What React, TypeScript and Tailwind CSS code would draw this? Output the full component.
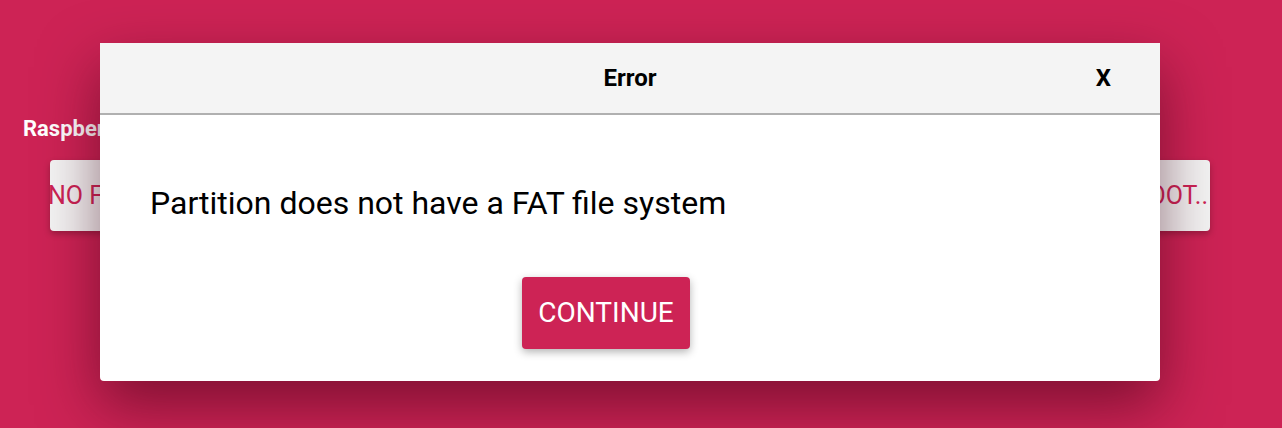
import React from "react";

export default function App() {
  return (
    <div className="relative h-[428px] w-full overflow-hidden bg-[#cd2355] font-['Roboto',sans-serif]">
      {/* page behind the dialog */}
      <div className="flex justify-between pt-[115px] pl-[23px] pr-[72px]">
        <div className="flex flex-col">
          <div className="h-[45px] whitespace-nowrap text-[22px] font-bold leading-[27px] text-white">Raspberry Pi Device</div>
          <button className="ml-[27px] flex h-[71px] w-[300px] items-center overflow-hidden rounded-[4px] bg-[#f4f4f4] text-[25px] whitespace-nowrap text-[#cd2355] shadow-[0_3px_6px_rgba(0,0,0,0.25)]">
            <span className="-ml-[2px]">NO FILTERING</span>
          </button>
        </div>
        <div className="flex flex-col">
          <div className="h-[45px] whitespace-nowrap text-[22px] font-bold leading-[27px] text-white">Operating System</div>
          <button className="flex h-[71px] w-[300px] items-center justify-center overflow-hidden rounded-[4px] bg-[#f4f4f4] text-[25px] whitespace-nowrap text-[#cd2355] shadow-[0_3px_6px_rgba(0,0,0,0.25)]">
            CHOOSE OS
          </button>
        </div>
        <div className="flex flex-col">
          <div className="h-[45px] whitespace-nowrap text-[22px] font-bold leading-[27px] text-white">Storage</div>
          <button className="flex h-[71px] w-[300px] items-center justify-end overflow-hidden rounded-[4px] bg-[#f4f4f4] pr-[2px] text-[25px] whitespace-nowrap text-[#cd2355] shadow-[0_3px_6px_rgba(0,0,0,0.25)]">
            SELECT BOOT..
          </button>
        </div>
      </div>

      {/* modal dialog */}
      <div className="absolute left-[100px] top-[43px] flex h-[338px] w-[1060px] flex-col rounded-b-[4px] bg-white shadow-[0_24px_60px_rgba(60,0,20,0.55)]">
        <div className="relative flex h-[72px] items-center justify-center border-b-2 border-[#b0b0b0] bg-[#f4f4f4]">
          <span className="text-[24px] font-bold leading-[28px] text-black">Error</span>
          <span className="absolute right-[49px] top-[21px] text-[24px] font-bold leading-[28px] text-black">X</span>
        </div>
        <div className="flex flex-1 flex-col px-[50px]">
          <p className="pt-[69px] text-[32px] leading-[38px] text-black">Partition does not have a FAT file system</p>
          <div className="mt-[55px] flex justify-center">
            <button className="mr-[48px] h-[72px] w-[168px] rounded-[4px] bg-[#cd2355] text-[28px] text-white shadow-[0_3px_8px_rgba(0,0,0,0.3)]">
              CONTINUE
            </button>
          </div>
        </div>
      </div>
    </div>
  );
}
